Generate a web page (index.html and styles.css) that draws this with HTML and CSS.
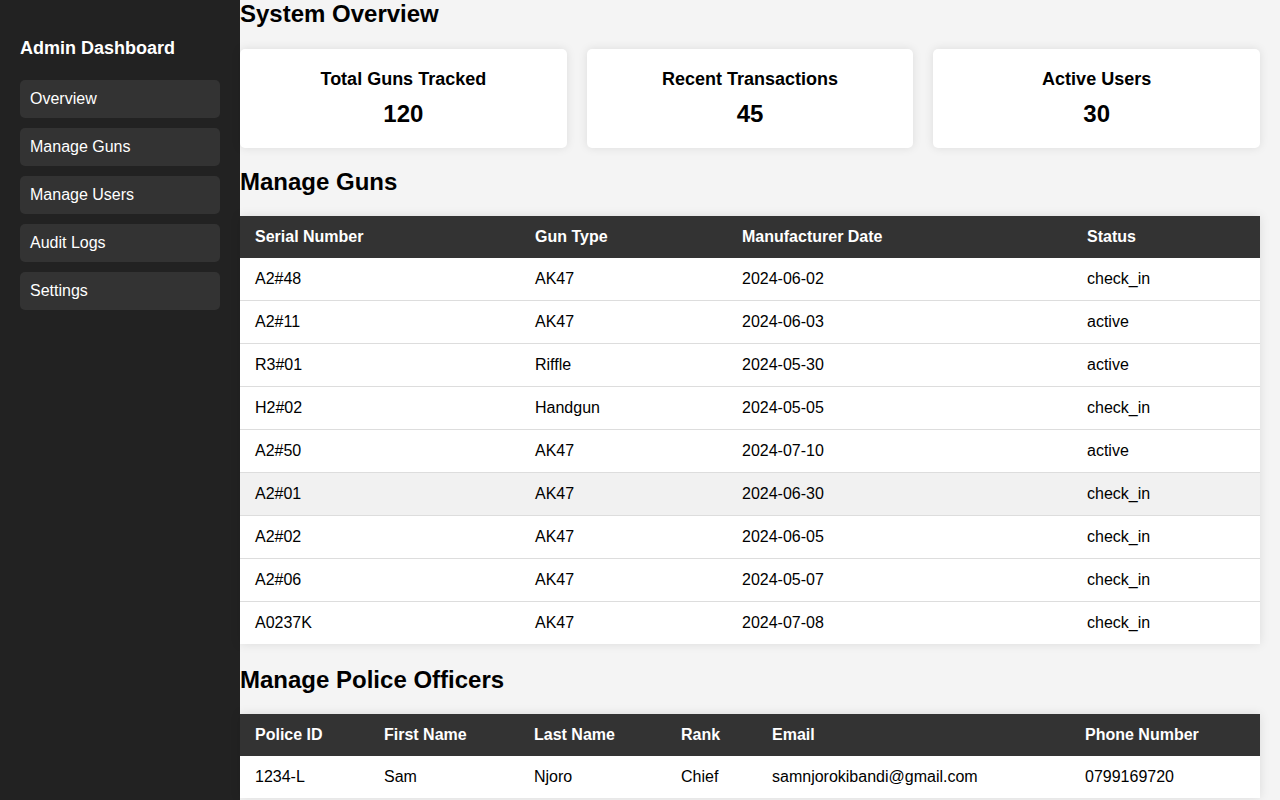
FILE: index.html
```html
<!DOCTYPE html>
<html lang="en">
<head>
<meta charset="utf-8">
<title>Admin Dashboard</title>
<link rel="stylesheet" href="styles.css">
</head>
<body>
<aside class="sidebar">
  <h3 class="brand">Admin Dashboard</h3>
  <nav class="nav">
    <a class="nav-item" href="#">Overview</a>
    <a class="nav-item" href="#">Manage Guns</a>
    <a class="nav-item" href="#">Manage Users</a>
    <a class="nav-item" href="#">Audit Logs</a>
    <a class="nav-item" href="#">Settings</a>
  </nav>
</aside>
<main class="main">
  <h2 class="section-title first">System Overview</h2>
  <div class="cards">
    <div class="card"><h3 class="card-title">Total Guns Tracked</h3><p class="card-value">120</p></div>
    <div class="card"><h3 class="card-title">Recent Transactions</h3><p class="card-value">45</p></div>
    <div class="card"><h3 class="card-title">Active Users</h3><p class="card-value">30</p></div>
  </div>

  <h2 class="section-title">Manage Guns</h2>
  <table class="data-table">
    <colgroup>
      <col class="g1"><col class="g2"><col class="g3"><col class="g4">
    </colgroup>
    <thead>
      <tr><th>Serial Number</th><th>Gun Type</th><th>Manufacturer Date</th><th>Status</th></tr>
    </thead>
    <tbody>
      <tr><td>A2#48</td><td>AK47</td><td>2024-06-02</td><td>check_in</td></tr>
      <tr><td>A2#11</td><td>AK47</td><td>2024-06-03</td><td>active</td></tr>
      <tr><td>R3#01</td><td>Riffle</td><td>2024-05-30</td><td>active</td></tr>
      <tr><td>H2#02</td><td>Handgun</td><td>2024-05-05</td><td>check_in</td></tr>
      <tr><td>A2#50</td><td>AK47</td><td>2024-07-10</td><td>active</td></tr>
      <tr class="hover"><td>A2#01</td><td>AK47</td><td>2024-06-30</td><td>check_in</td></tr>
      <tr><td>A2#02</td><td>AK47</td><td>2024-06-05</td><td>check_in</td></tr>
      <tr><td>A2#06</td><td>AK47</td><td>2024-05-07</td><td>check_in</td></tr>
      <tr><td>A0237K</td><td>AK47</td><td>2024-07-08</td><td>check_in</td></tr>
    </tbody>
  </table>

  <h2 class="section-title officers">Manage Police Officers</h2>
  <table class="data-table">
    <colgroup>
      <col class="p1"><col class="p2"><col class="p3"><col class="p4"><col class="p5"><col class="p6">
    </colgroup>
    <thead>
      <tr><th>Police ID</th><th>First Name</th><th>Last Name</th><th>Rank</th><th>Email</th><th>Phone Number</th></tr>
    </thead>
    <tbody>
      <tr><td>1234-L</td><td>Sam</td><td>Njoro</td><td>Chief</td><td>samnjorokibandi@gmail.com</td><td>0799169720</td></tr>
    </tbody>
  </table>
</main>
</body>
</html>
```

FILE: styles.css
```css
* { box-sizing: border-box; }

body {
  margin: 0;
  display: flex;
  align-items: stretch;
  min-height: 100vh;
  background: #f4f4f4;
  font-family: "Liberation Sans", Arial, sans-serif;
  color: #000;
}

.sidebar {
  flex: 0 0 240px;
  width: 240px;
  min-height: 100vh;
  background: #222;
  color: #fff;
  padding: 20px;
}

.brand {
  margin: 17px 0 21px;
  font-size: 18px;
  line-height: 22px;
  font-weight: bold;
}

.nav {
  display: flex;
  flex-direction: column;
  gap: 10px;
}

.nav-item {
  display: block;
  background: #333;
  color: #fff;
  text-decoration: none;
  font-size: 16px;
  line-height: 18px;
  padding: 10px;
  border-radius: 5px;
}

.main {
  flex: 1;
  padding: 0 20px 20px 0;
}

.section-title {
  font-size: 24px;
  line-height: 28px;
  font-weight: bold;
  margin: 20px 0;
}

.section-title.first {
  margin: 0 0 21px;
}

.section-title.officers {
  margin-top: 22px;
}

.cards {
  display: grid;
  grid-template-columns: repeat(3, 1fr);
  gap: 20px;
}

.card {
  background: #fff;
  border-radius: 5px;
  box-shadow: 0 0 10px rgba(0, 0, 0, 0.1);
  padding: 20px;
  text-align: center;
}

.card-title {
  margin: 0 0 10px;
  font-size: 18px;
  line-height: 21px;
  font-weight: bold;
}

.card-value {
  margin: 0;
  font-size: 24px;
  line-height: 28px;
  font-weight: bold;
}

.data-table {
  width: 100%;
  border-collapse: collapse;
  table-layout: fixed;
  background: #fff;
  box-shadow: 0 0 10px rgba(0, 0, 0, 0.1);
}

.data-table th,
.data-table td {
  text-align: left;
  font-size: 16px;
  line-height: 18px;
  padding: 12px 15px;
  border-bottom: 1px solid #ddd;
}

.data-table th {
  background: #333;
  color: #fff;
  font-weight: bold;
  border-bottom: none;
}

.data-table tbody tr:last-child td {
  border-bottom: none;
}

.data-table tr.hover td {
  background: #f1f1f1;
}

.g1 { width: 280px; }
.g2 { width: 207px; }
.g3 { width: 345px; }
.g4 { width: 188px; }

.p1 { width: 129px; }
.p2 { width: 150px; }
.p3 { width: 147px; }
.p4 { width: 91px; }
.p5 { width: 313px; }
.p6 { width: 190px; }
```
